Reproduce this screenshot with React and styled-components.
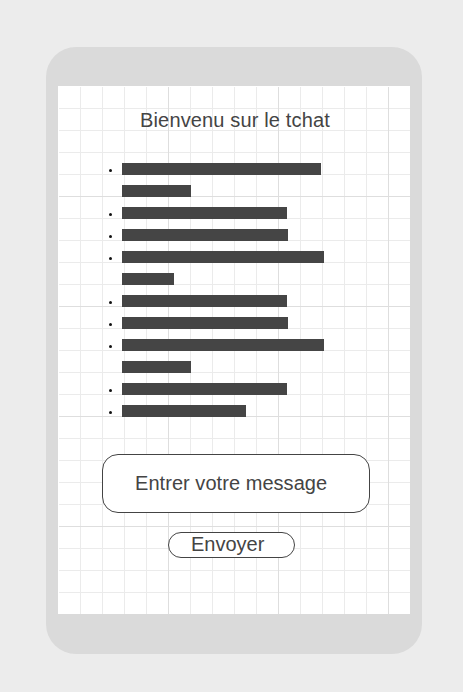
import React from 'react';
import styled, { createGlobalStyle } from 'styled-components';

/***************************************
  GLOBAL
***************************************/

const Global = createGlobalStyle`
  html, body {
    margin: 0;
    padding: 0;
    background: #ececec;
    font-family: "Liberation Sans", Arial, sans-serif;
  }
`;

/***************************************
  COMPONENTS
***************************************/

const Page = styled.div`
  width: 463px;
  height: 692px;
  padding: 47px 0 0 46px;
  box-sizing: border-box;
`;

const Phone = styled.div`
  width: 376px;
  height: 607px;
  box-sizing: border-box;
  padding: 39px 12px 40px 12px;
  border-radius: 30px;
  background: #dadada;
`;

const Screen = styled.div`
  width: 352px;
  height: 528px;
  box-sizing: border-box;
  padding-top: 23px;
  display: flex;
  flex-direction: column;
  background-color: #ffffff;
  background-image:
    linear-gradient(to right, #dedede 1px, transparent 1px),
    linear-gradient(to bottom, #dedede 1px, transparent 1px),
    linear-gradient(to right, #ebebeb 1px, transparent 1px),
    linear-gradient(to bottom, #ebebeb 1px, transparent 1px);
  background-size: 110px 110px, 110px 110px, 22px 22px, 22px 22px;
  box-shadow: inset 1px 1px 0 #ffffff;
`;

const Title = styled.h1`
  margin: 0;
  font-size: 20px;
  line-height: 23px;
  font-weight: normal;
  letter-spacing: 0.15px;
  color: #444444;
  text-align: center;
  padding-left: 2px;
`;

const List = styled.ul`
  list-style: none;
  margin: 26px 0 0;
  padding: 0 0 0 51px;
  display: flex;
  flex-direction: column;
`;

const Item = styled.li`
  display: flex;
  align-items: flex-start;
  gap: 10px;
`;

const Bullet = styled.span`
  width: 3px;
  height: 3px;
  margin-top: 11px;
  border-radius: 50%;
  background: #111111;
  flex: 0 0 auto;
`;

const Lines = styled.div`
  display: flex;
  flex-direction: column;
`;

const Bar = styled.div`
  width: ${(p) => p.$w}px;
  height: 12px;
  margin: 5px 0;
  background: #454545;
`;

const Input = styled.div`
  width: 268px;
  height: 59px;
  box-sizing: border-box;
  margin: 32px 0 0 44px;
  padding-left: 32px;
  display: flex;
  align-items: center;
  border: 1px solid #444444;
  border-radius: 16px;
  background: #ffffff;
  font-size: 20px;
  line-height: 23px;
  letter-spacing: 0.05px;
  color: #444444;
`;

const Button = styled.button`
  width: 127px;
  height: 26px;
  box-sizing: border-box;
  margin: 19px 0 0 110px;
  padding: 0 0 3px 22px;
  display: flex;
  align-items: center;
  border: 1px solid #444444;
  border-radius: 13px;
  background: #ffffff;
  font-family: inherit;
  font-size: 20px;
  line-height: 20px;
  color: #444444;
  cursor: pointer;
`;

/***************************************
  DATA
***************************************/

const messages = [
  [199, 69],
  [165],
  [166],
  [202, 52],
  [165],
  [166],
  [202, 69],
  [165],
  [124],
];

/***************************************
  MAIN
***************************************/

const App = () => (
  <Page>
    <Global />
    <Phone>
      <Screen>
        <Title>Bienvenu sur le tchat</Title>
        <List>
          {messages.map((lines, i) => (
            <Item key={i}>
              <Bullet />
              <Lines>
                {lines.map((w, j) => <Bar key={j} $w={w} />)}
              </Lines>
            </Item>
          ))}
        </List>
        <Input>Entrer votre message</Input>
        <Button>Envoyer</Button>
      </Screen>
    </Phone>
  </Page>
);

/**************************************/

export default App;
